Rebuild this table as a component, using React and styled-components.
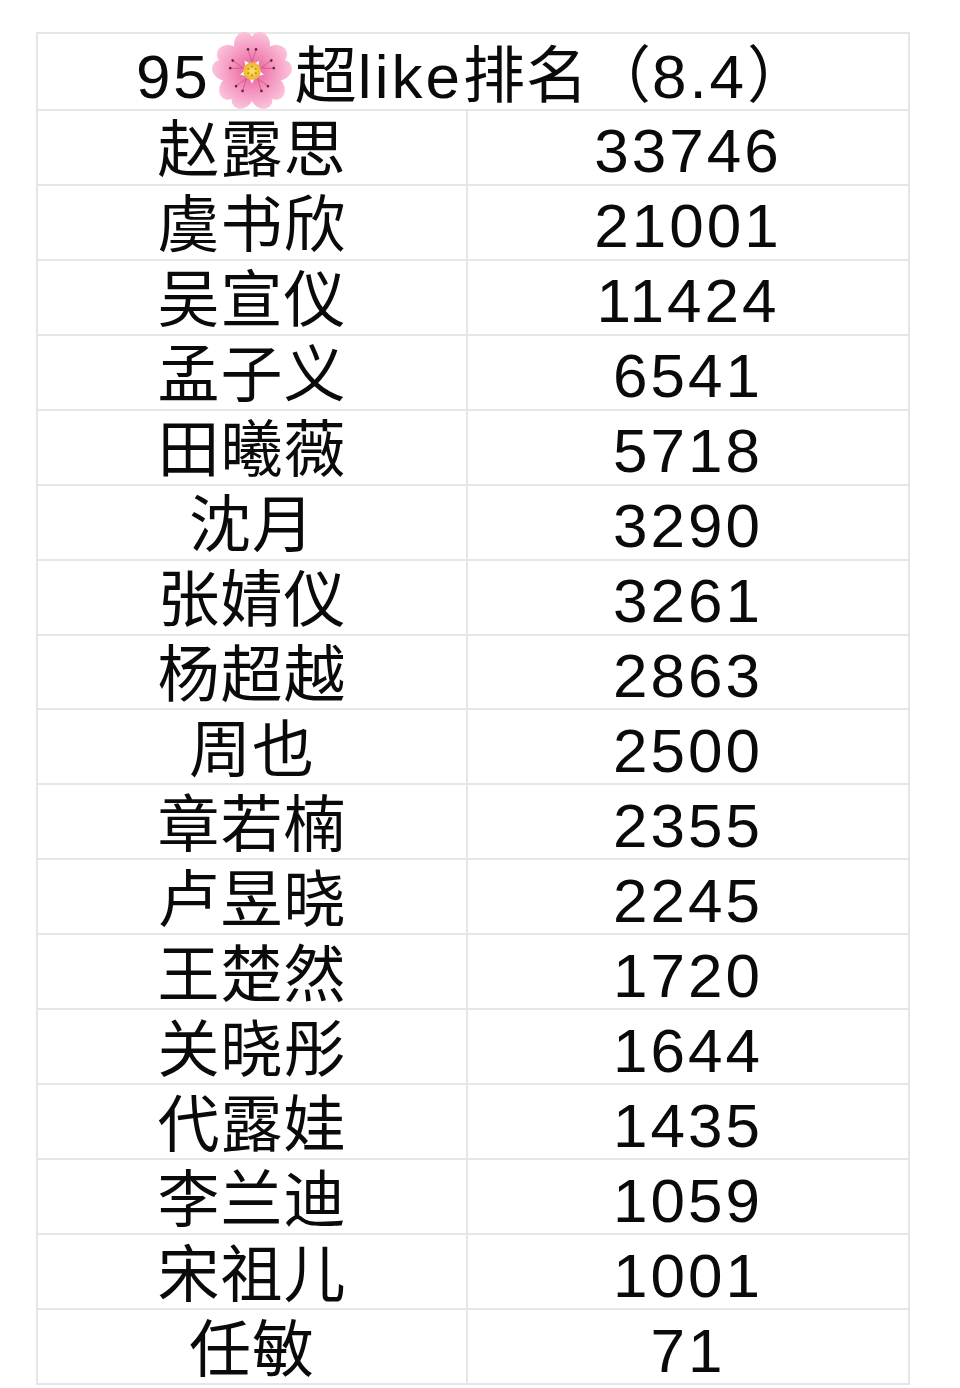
import { createGlobalStyle, styled } from "styled-components"

const GlobalStyle = createGlobalStyle`
    html, body {
        margin: 0;
        padding: 0;
        background-color: #ffffff;
    }
`

const Page = styled("div")`
    padding: 32px 0 0 36px;
    box-sizing: border-box;
    width: 960px;
    height: 1388px;
    overflow: hidden;
`

const Table = styled("div")`
    width: 874px;
    height: 1353px;
    display: grid;
    grid-template-columns: 430px 1fr;
    grid-template-rows: repeat(18, minmax(0, 1fr));
    border: 2px solid #e6e6e6;
    box-sizing: border-box;

    font-family: "Liberation Sans", "Noto Sans CJK SC", sans-serif;
    font-size: 62px;
    line-height: 1;
    color: #0a0a0a;
`

const Cell = styled("div")`
    display: flex;
    align-items: center;
    justify-content: center;
    min-height: 0;
    padding-top: 8px;
    box-sizing: border-box;
    white-space: nowrap;
    letter-spacing: ${props => props.$num ? "3px" : "1px"};
    border-top: ${props => props.$first ? "none" : "2px solid #e6e6e6"};
    border-right: ${props => props.$left ? "2px solid #e6e6e6" : "none"};
`

const Header = styled(Cell)`
    grid-column: 1 / -1;
    padding-top: 12px;
    letter-spacing: 1px;
`

const Latin = styled("span")`
    letter-spacing: 3px;
`

const Blossom = styled("svg")`
    width: 82px;
    height: 80px;
    margin: -12px 2px 0 0;
    flex-shrink: 0;
`

const rows = [
    ["赵露思", "33746"],
    ["虞书欣", "21001"],
    ["吴宣仪", "11424"],
    ["孟子义", "6541"],
    ["田曦薇", "5718"],
    ["沈月", "3290"],
    ["张婧仪", "3261"],
    ["杨超越", "2863"],
    ["周也", "2500"],
    ["章若楠", "2355"],
    ["卢昱晓", "2245"],
    ["王楚然", "1720"],
    ["关晓彤", "1644"],
    ["代露娃", "1435"],
    ["李兰迪", "1059"],
    ["宋祖儿", "1001"],
    ["任敏", "71"],
]

// one petal pointing up, notched at the tip
const petal = "M0,-9 C-18,-13 -30,-33 -17,-46 C-11,-51 -3,-49 0,-43 C3,-49 11,-51 17,-46 C30,-33 18,-13 0,-9 Z"

const CherryBlossom = () => (
    <Blossom viewBox="-50 -50 100 100">
        <defs>
            <radialGradient id="petalFill" cx="0" cy="0" r="50" gradientUnits="userSpaceOnUse">
                <stop offset="0.2" stopColor="#ee6fa6" />
                <stop offset="0.6" stopColor="#f59cc3" />
                <stop offset="1" stopColor="#fbc4dc" />
            </radialGradient>
            <radialGradient id="centerFill" cx="0" cy="0" r="11" gradientUnits="userSpaceOnUse">
                <stop offset="0" stopColor="#fbe46a" />
                <stop offset="1" stopColor="#e9b52c" />
            </radialGradient>
        </defs>
        {[0, 72, 144, 216, 288].map(a => (
            <g key={a} transform={`rotate(${a})`}>
                <path d={petal} fill="url(#petalFill)" />
                <line x1="0" y1="-12" x2="-5" y2="-26" stroke="#c2497c" strokeWidth="0.8" />
                <line x1="0" y1="-12" x2="5" y2="-26" stroke="#c2497c" strokeWidth="0.8" />
                <circle cx="-5" cy="-27" r="1.7" fill="#5d2a45" />
                <circle cx="5" cy="-27" r="1.7" fill="#5d2a45" />
            </g>
        ))}
        <circle r="11" fill="url(#centerFill)" />
        {[0, 60, 120, 180, 240, 300].map(a => (
            <circle key={a} transform={`rotate(${a})`} cx="0" cy="-5.5" r="1.4" fill="#d98a1e" />
        ))}
    </Blossom>
)

const App = () => {
    return (
        <>
            <GlobalStyle />
            <Page>
                <Table>
                    <Header $first>
                        <Latin>95</Latin>
                        <CherryBlossom />
                        超<Latin>like</Latin>排名（<Latin>8.4</Latin>）
                    </Header>
                    {
                        rows.flatMap(([name, count]) => [
                            <Cell key={name} $left>{name}</Cell>,
                            <Cell key={name + "n"} $num>{count}</Cell>
                        ])
                    }
                </Table>
            </Page>
        </>
    )
}

export default App
